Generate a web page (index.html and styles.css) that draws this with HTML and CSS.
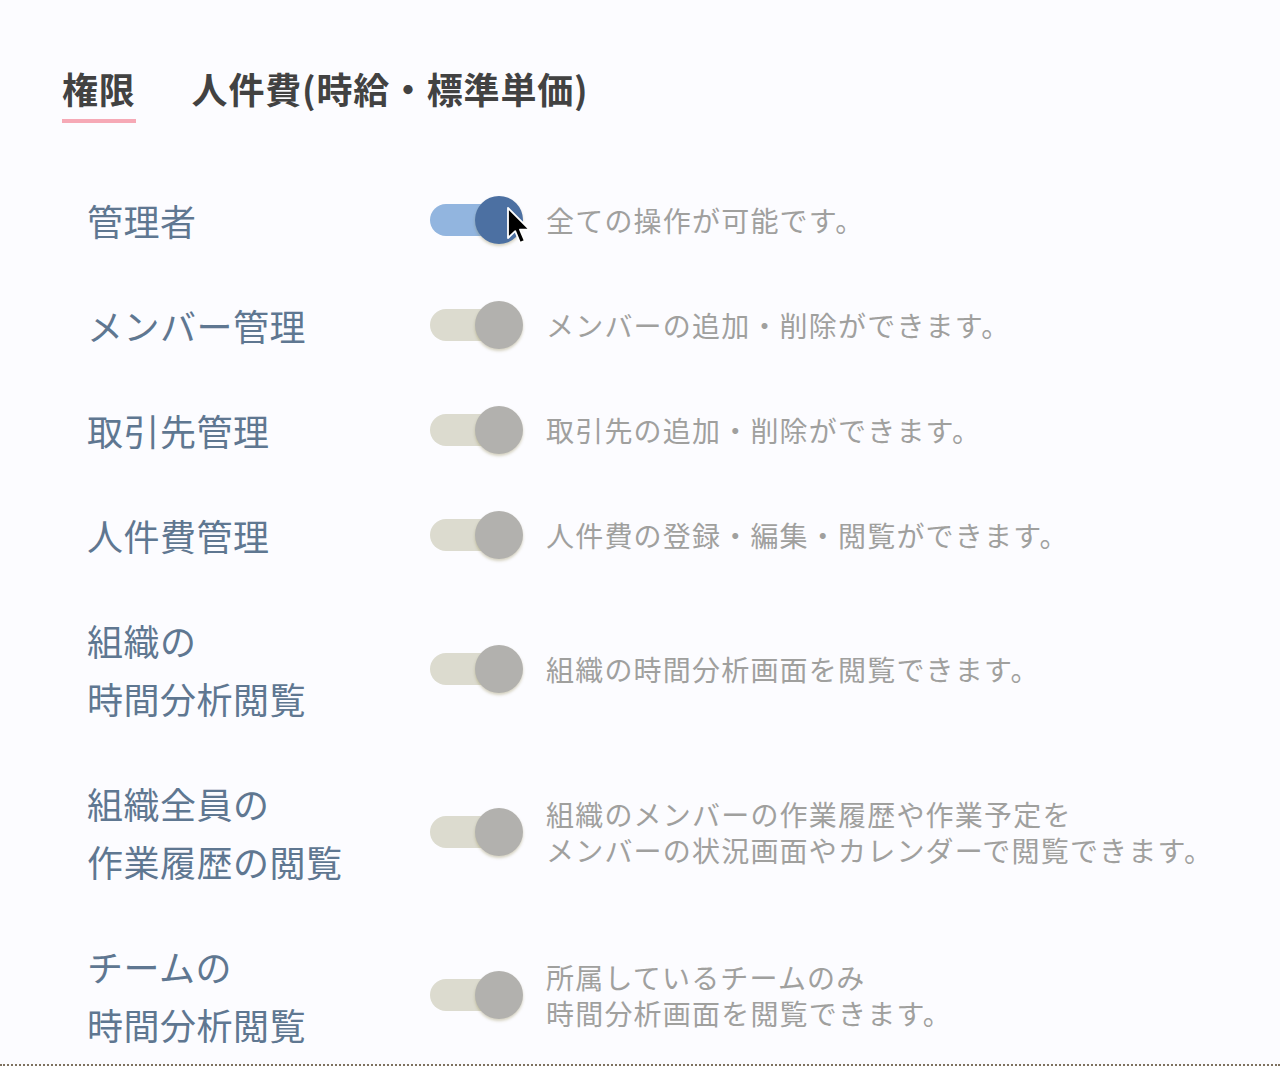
FILE: index.html
```html
<!DOCTYPE html>
<html lang="ja">
<head>
<meta charset="utf-8">
<title>権限</title>
<link rel="stylesheet" href="styles.css">
</head>
<body>
<div class="frame">
  <nav class="tabs">
    <div class="tab active">権限</div>
    <div class="tab">人件費(時給・標準単価)</div>
  </nav>
  <div class="list">
    <div class="row">
      <div class="label">管理者</div>
      <div class="switch on">
        <div class="track"></div>
        <div class="knob"></div>
        <svg class="cursor" width="26" height="40" viewBox="0 0 13 20"><path d="M1 1 L1 16 L4.6 12.6 L7 18.4 L9.4 17.4 L7 11.8 L11.8 11.8 Z" fill="#000" stroke="#fff" stroke-width="0.9" stroke-linejoin="round"/></svg>
      </div>
      <div class="desc">全ての操作が可能です。</div>
    </div>
    <div class="row">
      <div class="label">メンバー管理</div>
      <div class="switch"><div class="track"></div><div class="knob"></div></div>
      <div class="desc">メンバーの追加・削除ができます。</div>
    </div>
    <div class="row">
      <div class="label">取引先管理</div>
      <div class="switch"><div class="track"></div><div class="knob"></div></div>
      <div class="desc">取引先の追加・削除ができます。</div>
    </div>
    <div class="row">
      <div class="label">人件費管理</div>
      <div class="switch"><div class="track"></div><div class="knob"></div></div>
      <div class="desc">人件費の登録・編集・閲覧ができます。</div>
    </div>
    <div class="row">
      <div class="label">組織の<br>時間分析閲覧</div>
      <div class="switch"><div class="track"></div><div class="knob"></div></div>
      <div class="desc">組織の時間分析画面を閲覧できます。</div>
    </div>
    <div class="row">
      <div class="label">組織全員の<br>作業履歴の閲覧</div>
      <div class="switch"><div class="track"></div><div class="knob"></div></div>
      <div class="desc">組織のメンバーの作業履歴や作業予定を<br>メンバーの状況画面やカレンダーで閲覧できます。</div>
    </div>
    <div class="row">
      <div class="label">チームの<br>時間分析閲覧</div>
      <div class="switch"><div class="track"></div><div class="knob"></div></div>
      <div class="desc">所属しているチームのみ<br>時間分析画面を閲覧できます。</div>
    </div>
  </div>
</div>
</body>
</html>
```

FILE: styles.css
```css
html, body {
  margin: 0;
  padding: 0;
  background: #fcfcff;
}

body {
  font-family: "Noto Sans CJK JP", "Noto Sans", sans-serif;
}

.frame {
  height: 1064px;
  overflow: hidden;
  background: #fcfcff;
  border-bottom: 2px dotted #7e7260;
}

.tabs {
  display: flex;
  gap: 56px;
  padding: 64px 0 0 62px;
}

.tab {
  font-size: 36px;
  line-height: 48px;
  font-weight: 700;
  color: #424242;
  padding-bottom: 7px;
  border-bottom: 4px solid transparent;
  letter-spacing: 0.8px;
}

.tab.active {
  border-bottom-color: #f6a9b6;
}

.list {
  margin-top: 44px;
  padding-left: 87px;
}

.row {
  display: grid;
  grid-template-columns: 343px 93px 1fr;
  align-items: center;
  padding: 23.5px 0;
}

.label {
  font-size: 36px;
  line-height: 58px;
  color: #5f7791;
  font-weight: 400;
  letter-spacing: 0.5px;
}

.switch {
  position: relative;
  width: 93px;
  height: 48px;
}

.track {
  width: 82px;
  height: 32px;
  margin-top: 8px;
  border-radius: 16px;
  background: #dcdbcf;
}

.knob {
  position: absolute;
  left: 45px;
  top: 0;
  width: 48px;
  height: 48px;
  border-radius: 50%;
  background: #b2b1ae;
  box-shadow: 0 2px 3px rgba(110, 100, 30, 0.28);
}

.switch.on .track {
  background: #92b5df;
}

.switch.on .knob {
  background: #4c70a2;
}

.cursor {
  position: absolute;
  left: 76px;
  top: 10px;
}

.desc {
  padding-left: 23px;
  font-size: 28px;
  line-height: 36px;
  color: #a0a09e;
  letter-spacing: 1.2px;
}
```
